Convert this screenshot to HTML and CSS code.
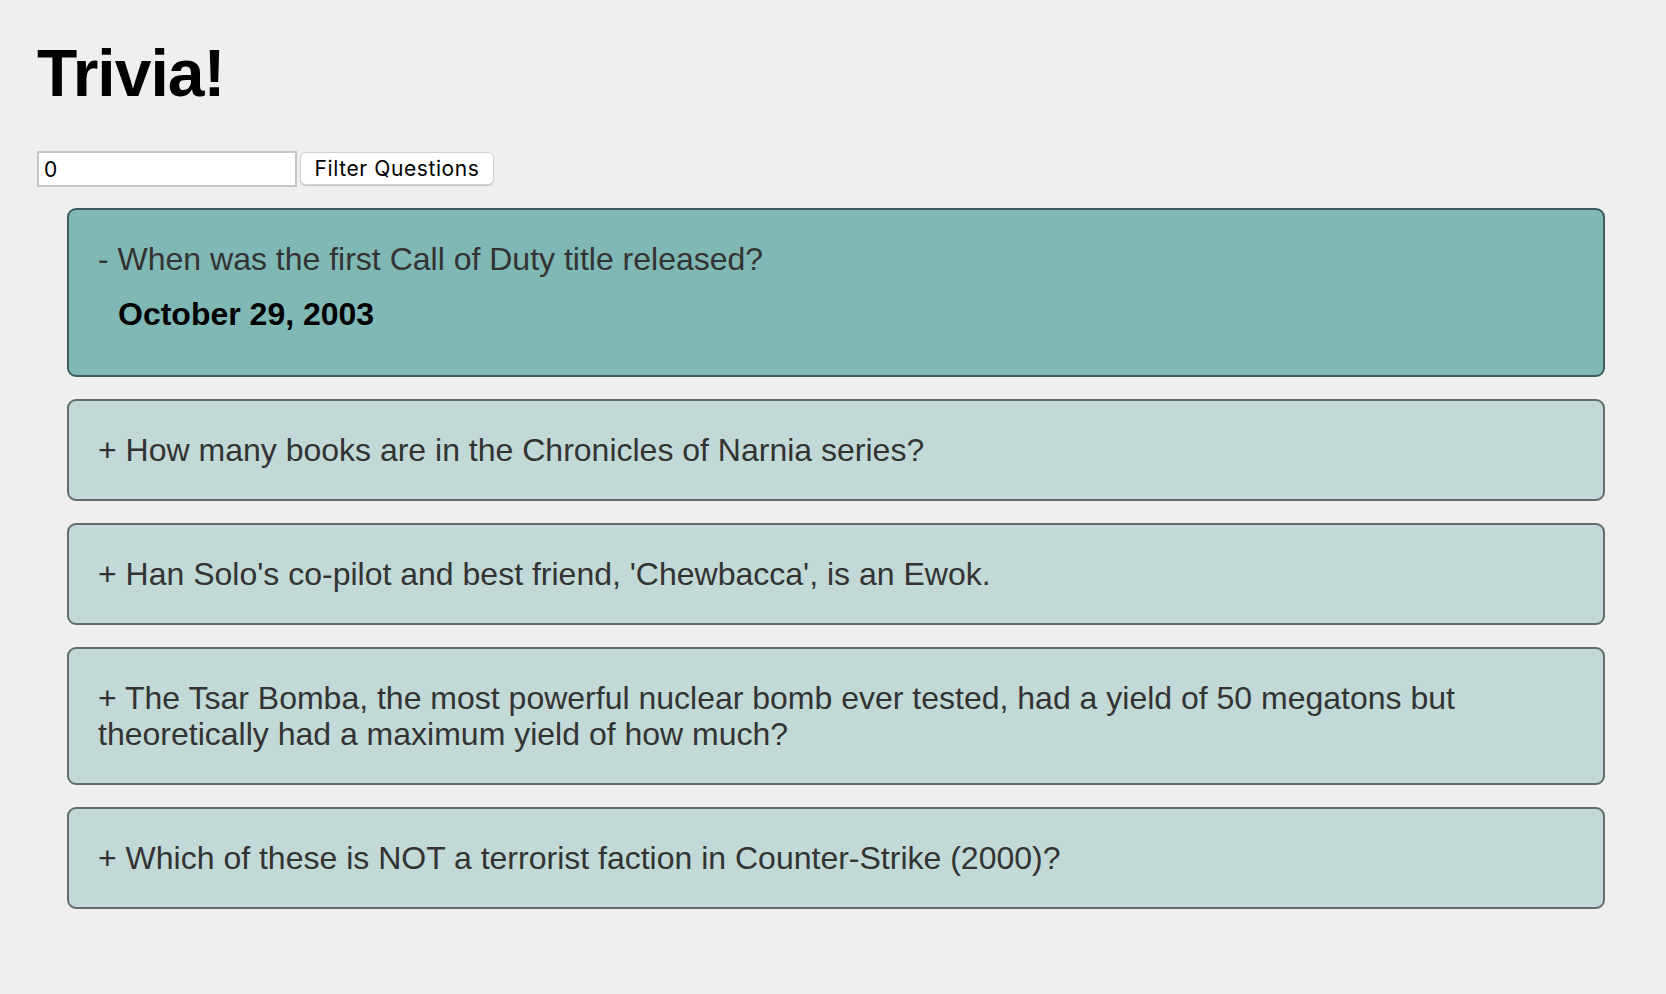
FILE: index.html
```html
<!DOCTYPE html>
<html lang="en">
<head>
<meta charset="utf-8">
<title>Trivia!</title>
<link rel="stylesheet" href="styles.css">
</head>
<body>
  <h1 class="title">Trivia!</h1>
  <div class="controls">
    <input class="filter-input" type="text" value="0">
    <button class="filter-button" type="button">Filter Questions</button>
  </div>
  <div class="questions">
    <div class="card card-open">
      <div class="question">- When was the first Call of Duty title released?</div>
      <div class="answer">October 29, 2003</div>
    </div>
    <div class="card">
      <div class="question">+ How many books are in the Chronicles of Narnia series?</div>
    </div>
    <div class="card">
      <div class="question">+ Han Solo's co-pilot and best friend, 'Chewbacca', is an Ewok.</div>
    </div>
    <div class="card">
      <div class="question">+ The Tsar Bomba, the most powerful nuclear bomb ever tested, had a yield of 50 megatons but theoretically had a maximum yield of how much?</div>
    </div>
    <div class="card">
      <div class="question">+ Which of these is NOT a terrorist faction in Counter-Strike (2000)?</div>
    </div>
  </div>
</body>
</html>
```
FILE: styles.css
```css
html, body {
  margin: 0;
  padding: 0;
}

body {
  background: #efefef;
  padding: 0 37px;
  font-family: "Liberation Sans", Arial, Helvetica, sans-serif;
  color: #333;
}

.title {
  font-size: 66px;
  line-height: 76px;
  letter-spacing: -1px;
  font-weight: bold;
  color: #000;
  margin: 35px 0 40px;
}

.controls {
  display: flex;
  align-items: flex-start;
  gap: 3px;
}

.filter-input {
  box-sizing: border-box;
  width: 260px;
  height: 36px;
  margin: 0;
  padding: 0 5px;
  border: 2px solid #c6c6c6;
  background: #fff;
  font-family: Inter, "Liberation Sans", sans-serif;
  font-size: 21px;
  color: #000;
  outline: none;
}

.filter-button {
  box-sizing: border-box;
  width: 194px;
  height: 33px;
  margin: 1px 0 0;
  padding: 0;
  border: 1px solid #d2d2d2;
  border-radius: 6px;
  background: #fff;
  box-shadow: 0 1px 1px rgba(0, 0, 0, 0.18);
  font-family: Inter, "Liberation Sans", sans-serif;
  font-size: 21px;
  letter-spacing: 0.6px;
  color: #000;
}

.questions {
  display: flex;
  flex-direction: column;
  gap: 22px;
  margin: 21px 24px 0 30px;
}

.card {
  border: 2px solid #5f6d6d;
  border-radius: 9px;
  background: #c2d9d7;
  padding: 31px 29px;
}

.card-open {
  background: #80b8b6;
  border-color: #3f5c5c;
}

.question {
  font-size: 32px;
  line-height: 36px;
  color: #333;
}

.answer {
  font-size: 32px;
  line-height: 36px;
  font-weight: bold;
  color: #000;
  margin: 19px 0 12px 20px;
}
```
